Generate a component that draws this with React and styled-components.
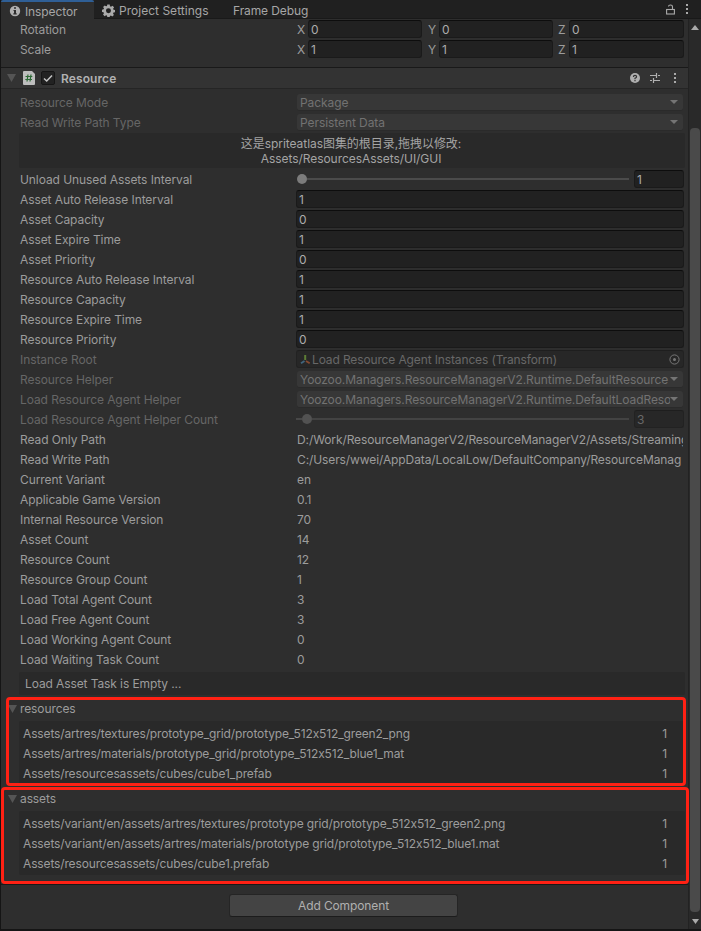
import React from "react";
import styled, { createGlobalStyle, css } from "styled-components";

const Global = createGlobalStyle`
  * { box-sizing: border-box; }
  html, body { margin: 0; padding: 0; background: #151515; overflow: hidden; }
`;

const Window = styled.div`
  width: 701px;
  height: 931px;
  display: flex;
  flex-direction: column;
  padding: 0 0 2px 1px;
  background: #151515;
  color: #9c9c9c;
  font-family: Inter, "Noto Sans CJK SC", sans-serif;
  font-size: 12px;
  line-height: 18px;
  letter-spacing: -0.1px;
  white-space: nowrap;
`;

const TabBar = styled.div`
  height: 19px;
  flex: none;
  display: flex;
  background: #202020;
  border-bottom: 1px solid #191919;
`;

const Tab = styled.div`
  width: ${(p) => p.$w}px;
  height: ${(p) => (p.$active ? 19 : 18)}px;
  display: flex;
  align-items: center;
  gap: 4px;
  padding: 4px 0 0 8px;
  letter-spacing: ${(p) => p.$ls ?? -0.1}px;
  color: #a6a6a6;
  svg {
    margin-top: -2px;
  }
  ${(p) =>
    p.$active &&
    css`
      background: #2e2e2e;
      border-top: 2px solid #2f5f96;
      padding-top: 2px;
      border-radius: 2px 2px 0 0;
    `}
`;

const TabTools = styled.div`
  margin-left: auto;
  width: 35px;
  display: flex;
  align-items: center;
  gap: 10px;
`;

const Body = styled.div`
  flex: 1;
  min-height: 0;
  display: flex;
`;

const Panel = styled.div`
  width: 688px;
  background: #2e2e2e;
  border-right: 1px solid #222;
`;

const Scroll = styled.div`
  flex: 1;
  display: flex;
  flex-direction: column;
  align-items: center;
  background: #292929;
  padding: 6px 0 5px;
`;

const Track = styled.div`
  flex: 1;
  width: 10px;
  padding: 98px 0 7px;
`;

const Thumb = styled.div`
  height: 100%;
  border-radius: 4px;
  background: #4a4a4a;
`;

const Transform = styled.div`
  height: 48px;
  padding-top: 1px;
`;

const Rows = styled.div`
  display: flex;
  flex-direction: column;
  gap: 2px;
  padding-top: ${(p) => p.$top ?? 0}px;
`;

const Row = styled.div`
  height: 18px;
  display: flex;
  padding: 0 4px 0 19px;
  color: ${(p) => (p.$off ? "#666" : "inherit")};
`;

const Label = styled.div`
  width: 276px;
  flex: none;
  padding-top: 1px;
  letter-spacing: -0.08px;
`;

const Axis = styled.div`
  width: ${(p) => p.$w}px;
  padding: 1px 0 0 1px;
`;

const AxisName = styled.span`
  padding-left: ${(p) => p.$x}px;
`;

const Field = styled.div`
  flex: ${(p) => (p.$w ? "none" : 1)};
  width: ${(p) => (p.$w ? p.$w + "px" : "auto")};
  height: 18px;
  display: flex;
  align-items: center;
  padding: 1px 2px 0 2px;
  border: 1px solid #1a1a1a;
  border-top-color: #0d0d0d;
  border-radius: 3px;
  background: #212121;
  color: #acacac;
  ${(p) =>
    p.$off &&
    css`
      color: #686868;
      background: #272727;
      border-color: #222;
      border-top-color: #1e1e1e;
    `}
`;

const Select = styled.div`
  flex: 1;
  min-width: 0;
  height: 17px;
  margin: 1px 1px 0;
  display: flex;
  align-items: center;
  justify-content: space-between;
  padding: 0 5px 0 3px;
  border-radius: 3px;
  border-bottom: 1px solid #2a2a2a;
  background: #373737;
  color: #727272;
`;

const SelectText = styled.span`
  flex: 1;
  overflow: hidden;
  padding-top: 1px;
  letter-spacing: -0.07px;
`;

const Value = styled.div`
  flex: 1;
  min-width: 0;
  margin: 0 1px;
  padding-top: 1px;
  overflow: hidden;
`;

const Slider = styled.div`
  width: 333px;
  height: 18px;
  margin-right: 5px;
  display: flex;
  align-items: center;
  padding-left: ${(p) => (p.$lead ? 0 : 1)}px;
  &::before {
    content: "";
    width: ${(p) => p.$lead}px;
    height: 2px;
    background: #484848;
  }
  &::after {
    content: "";
    flex: 1;
    height: 2px;
    background: ${(p) => (p.$off ? "#434343" : "#4b4b4b")};
  }
`;

const Knob = styled.div`
  width: 10px;
  height: 10px;
  border-radius: 50%;
  background: ${(p) => (p.$off ? "#525252" : "#7c7c7c")};
`;

const Header = styled.div`
  height: 22px;
  display: flex;
  align-items: center;
  padding: 0 11px 0 6px;
  border-top: 1px solid #191919;
  border-bottom: 1px solid #252525;
  background: #333;
`;

const FoldMark = styled.div`
  display: flex;
  width: 16px;
`;

const Title = styled.div`
  margin-left: 6px;
  padding-top: 1px;
  flex: 1;
  font-weight: 600;
  letter-spacing: 0.1px;
  color: #b2b2b2;
`;

const Check = styled.div`
  width: 14px;
  height: 14px;
  margin-left: 6px;
  display: flex;
  align-items: center;
  justify-content: center;
  border: 1px solid #161616;
  border-radius: 2px;
  background: #222;
`;

const HeaderTools = styled.div`
  display: flex;
  align-items: center;
  gap: 9px;
  svg:last-child {
    margin-left: 3px;
  }
`;

const Box = styled.div`
  height: ${(p) => p.$h}px;
  margin: ${(p) => p.$mt}px 3px 0 18px;
  border-radius: 2px;
  background: #292929;
`;

const HelpBox = styled(Box)`
  padding: 3px 2px 0 0;
  text-align: center;
  line-height: 15px;
  letter-spacing: -0.05px;
  color: #a4a4a4;
`;

const TaskBox = styled(Box)`
  padding: 3px 6px 0;
`;

const Group = styled.div`
  position: relative;
  height: 90px;
  padding-top: 5px;
`;

const Outline = styled.div`
  position: absolute;
  top: ${(p) => p.$t}px;
  left: ${(p) => p.$l}px;
  width: ${(p) => p.$w}px;
  height: ${(p) => p.$h}px;
  border: 3px solid #ff2114;
  border-radius: 4px;
`;

const Foldout = styled.div`
  height: 18px;
  display: flex;
  align-items: center;
  gap: 3px;
  padding-left: 7px;
`;

const ListBox = styled(Box)`
  padding: 4px 18px 0 4px;
`;

const Item = styled.div`
  height: 20px;
  display: flex;
  justify-content: space-between;
  letter-spacing: -0.14px;
`;

const Footer = styled.div`
  height: 45px;
  margin-top: 9px;
  display: flex;
  justify-content: center;
  padding: 9px 2px 0 0;
  border-top: 1px solid #191919;
`;

const Button = styled.button`
  width: 229px;
  height: 23px;
  padding: 0;
  border: 1px solid #252525;
  border-bottom-color: #1c1c1c;
  border-radius: 3px;
  background: #444;
  color: #b0b0b0;
  font: inherit;
  letter-spacing: -0.12px;
`;

const ObjectName = styled.span`
  flex: 1;
  letter-spacing: -0.13px;
`;

const ObjectIcon = styled.span`
  display: flex;
  padding: 0 1px 0 1px;
`;

const Down = ({ w = 9, h = 8, c = "#555" }) => (
  <svg width={w} height={h} viewBox="0 0 10 8" preserveAspectRatio="none"><path d="M0 0H10L5 8Z" fill={c} /></svg>
);
const Up = () => (
  <svg width="8" height="5" viewBox="0 0 8 5"><path d="M4 0L8 5H0Z" fill="#aaa" /></svg>
);
const Arrow = () => <Down w={8} h={4} c="#747474" />;
const Kebab = () => (
  <svg width="4" height="12" viewBox="0 0 4 12" fill="#aaa"><path d="M1 1h2v2H1zM1 5h2v2H1zM1 9h2v2H1z" /></svg>
);
const Info = () => (
  <svg width="12" height="12" viewBox="0 0 12 12"><circle cx="6" cy="6" r="5.2" fill="#b0b0b0" /><path d="M5 2.200h2v1.600H5zM4.500 5H7v3.300h.7v1.100H4.300V8.300H5V6h-.5z" fill="#2e2e2e" /></svg>
);
const Gear = () => (
  <svg width="13" height="13" viewBox="0 0 24 24"><path fill="#aaa" fillRule="evenodd" d="M9.800 1h4.400l.6 3.100 1.800.8L19.300 3l3 3-1.800 2.700.8 1.700 2.700.5v4.300l-2.800.5-.8 1.800L22 20.200l-3 2.800-2.500-1.700-1.800.8L14.200 24H9.800l-.6-2.600-1.800-.8L4.900 22.500l-3-3 1.700-2.500-.8-1.700L0 14.700v-4.300l3-.6.7-1.700L2 5.600l3-3 2.500 1.700 1.700-.7zM12 7.900a4.600 4.600 0 1 0 0 9.200 4.600 4.600 0 0 0 0-9.200z" /></svg>
);
const Lock = () => (
  <svg width="9" height="11" viewBox="0 0 9 11" fill="none" stroke="#aaa" strokeWidth="1.1"><rect x=".6" y="5.5" width="7.8" height="4.5" /><path d="M6.500 5.500V2.800Q6.500 1 4.500 1T2.500 2.500" /></svg>
);
const Script = () => (
  <svg width="12" height="14" viewBox="0 0 12 14"><path d="M1 0h8l3 3v10q0 1-1 1H1q-1 0-1-1V1q0-1 1-1z" fill="#bdbdbd" /><path d="M5 3.500L4 10.500M8 3.500L7 10.500M2.500 5.500H9.300M2.300 8.500H9" stroke="#2c6a35" strokeWidth="1.2" /></svg>
);
const Help = () => (
  <svg width="10" height="10" viewBox="0 0 10 10"><circle cx="5" cy="5" r="5" fill="#b0b0b0" /><path d="M3.400 3.900Q3.400 2.400 5 2.400T6.600 3.800Q6.600 4.700 5 5.200V6.200M5 7v1.200" fill="none" stroke="#333" strokeWidth="1.2" /></svg>
);
const Preset = () => (
  <svg width="12" height="12" viewBox="0 0 12 12"><path d="M1 3.500h6M9 3.500h2M7.500 1v5M1 8.500h2M5 8.500h6M4.500 6v5" stroke="#b0b0b0" strokeWidth="1.2" /></svg>
);
const Tick = () => (
  <svg width="10" height="9" viewBox="0 0 10 9"><path d="M1 4.500L3.700 7L9 1.500" fill="none" stroke="#c4c4c4" strokeWidth="1.5" /></svg>
);
const Axes = () => (
  <svg width="11" height="10" viewBox="0 0 11 10"><path d="M5.200 0v5" stroke="#5d7d35" strokeWidth="2" /><path d="M4.500 6L1 8.300" stroke="#41667e" strokeWidth="1.8" /><path d="M6 6L9.700 8.300" stroke="#854a31" strokeWidth="1.8" /></svg>
);
const Target = () => (
  <svg width="11" height="11" viewBox="0 0 11 11"><circle cx="5.5" cy="5.5" r="4.6" fill="none" stroke="#777" /><circle cx="5.5" cy="5.5" r="1.5" fill="#777" /></svg>
);

const fields = [
  ["Asset Auto Release Interval", 1], ["Asset Capacity", 0], ["Asset Expire Time", 1], ["Asset Priority", 0],
  ["Resource Auto Release Interval", 1], ["Resource Capacity", 1], ["Resource Expire Time", 1], ["Resource Priority", 0],
];
const values = [
  ["Read Only Path", "D:/Work/ResourceManagerV2/ResourceManagerV2/Assets/Streaming"],
  ["Read Write Path", "C:/Users/wwei/AppData/LocalLow/DefaultCompany/ResourceManag"],
  ["Current Variant", "en"], ["Applicable Game Version", "0.1"], ["Internal Resource Version", "70"],
  ["Asset Count", "14"], ["Resource Count", "12"], ["Resource Group Count", "1"], ["Load Total Agent Count", "3"],
  ["Load Free Agent Count", "3"], ["Load Working Agent Count", "0"], ["Load Waiting Task Count", "0"],
];
const resources = [
  "Assets/artres/textures/prototype_grid/prototype_512x512_green2_png",
  "Assets/artres/materials/prototype_grid/prototype_512x512_blue1_mat",
  "Assets/resourcesassets/cubes/cube1_prefab",
];
const assets = [
  "Assets/variant/en/assets/artres/textures/prototype grid/prototype_512x512_green2.png",
  "Assets/variant/en/assets/artres/materials/prototype grid/prototype_512x512_blue1.mat",
  "Assets/resourcesassets/cubes/cube1.prefab",
];

const Vector = ({ label, v }) => (
  <Row>
    <Label>{label}</Label>
    <Axis $w={12}>X</Axis><Field $w={114}>{v}</Field>
    <Axis $w={17}><AxisName $x={5}>Y</AxisName></Axis><Field $w={114}>{v}</Field>
    <Axis $w={16}><AxisName $x={4}>Z</AxisName></Axis><Field $w={115}>{v}</Field>
  </Row>
);
const Dropdown = ({ label, text }) => (
  <Row $off><Label>{label}</Label><Select><SelectText>{text}</SelectText><Arrow /></Select></Row>
);
const List = ({ name, items, outline }) => (
  <Group>
    <Foldout><Down />{name}</Foldout>
    <ListBox $h={64} $mt={3}>
      {items.map((t) => <Item key={t}><span>{t}</span><span>1</span></Item>)}
    </ListBox>
    <Outline {...outline} />
  </Group>
);

export default function App() {
  return (
    <Window>
      <Global />
      <TabBar>
        <Tab $w={93} $active><Info />Inspector</Tab>
        <Tab $w={131} $ls={0.02}><Gear />Project Settings</Tab>
        <Tab $w={100}>Frame Debug</Tab>
        <TabTools><Lock /><Kebab /></TabTools>
      </TabBar>
      <Body>
        <Panel>
          <Transform>
            <Rows><Vector label="Rotation" v={0} /><Vector label="Scale" v={1} /></Rows>
          </Transform>
          <Header>
            <FoldMark><Down /></FoldMark><Script /><Check><Tick /></Check>
            <Title>Resource</Title>
            <HeaderTools><Help /><Preset /><Kebab /></HeaderTools>
          </Header>
          <Rows $top={4}>
            <Dropdown label="Resource Mode" text="Package" />
            <Dropdown label="Read Write Path Type" text="Persistent Data" />
          </Rows>
          <HelpBox $h={35} $mt={2}>这是spriteatlas图集的根目录,拖拽以修改:<br />Assets/ResourcesAssets/UI/GUI</HelpBox>
          <Rows $top={2}>
            <Row><Label>Unload Unused Assets Interval</Label><Slider $lead={0}><Knob /></Slider><Field $w={50}>1</Field></Row>
            {fields.map(([l, v]) => <Row key={l}><Label>{l}</Label><Field>{v}</Field></Row>)}
            <Row $off>
              <Label>Instance Root</Label>
              <Field $off><ObjectIcon><Axes /></ObjectIcon><ObjectName>Load Resource Agent Instances (Transform)</ObjectName><ObjectIcon><Target /></ObjectIcon></Field>
            </Row>
            <Dropdown label="Resource Helper" text="Yoozoo.Managers.ResourceManagerV2.Runtime.DefaultResource" />
            <Dropdown label="Load Resource Agent Helper" text="Yoozoo.Managers.ResourceManagerV2.Runtime.DefaultLoadReso" />
            <Row $off><Label>Load Resource Agent Helper Count</Label><Slider $off $lead={6}><Knob $off /></Slider><Field $off $w={50}>3</Field></Row>
            {values.map(([l, v]) => <Row key={l}><Label>{l}</Label><Value>{v}</Value></Row>)}
          </Rows>
          <TaskBox $h={23} $mt={4}>Load Asset Task is Empty ...</TaskBox>
          <List name="resources" items={resources} outline={{ $t: 2, $l: 5, $w: 680, $h: 89 }} />
          <List name="assets" items={assets} outline={{ $t: 2, $l: 0, $w: 688, $h: 97 }} />
          <Footer><Button>Add Component</Button></Footer>
        </Panel>
        <Scroll>
          <Up />
          <Track><Thumb /></Track>
          <Down w={7} h={5} c="#aaa" />
        </Scroll>
      </Body>
    </Window>
  );
}
